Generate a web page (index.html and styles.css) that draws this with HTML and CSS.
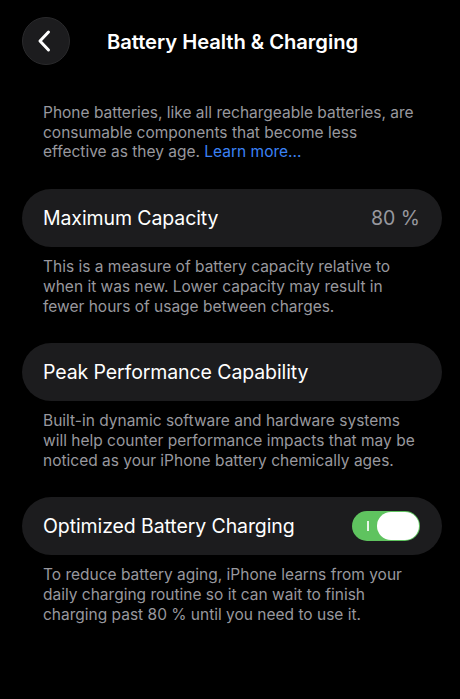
FILE: index.html
```html
<!DOCTYPE html>
<html lang="en">
<head>
    <meta charset="UTF-8">
    <meta name="viewport" content="width=device-width, initial-scale=1.0">
    <title>Battery Health &amp; Charging</title>
    <link rel="stylesheet" href="styles.css">
</head>
<body>
    <div class="screen">
        <header class="nav-bar">
            <button class="back-btn" aria-label="Back">
                <svg width="18" height="24" viewBox="0 0 18 24">
                    <path d="M12.5 3 L4 12 L12.5 21" fill="none" stroke="#fff" stroke-width="3" stroke-linecap="round" stroke-linejoin="round"/>
                </svg>
            </button>
            <h1>Battery Health &amp; Charging</h1>
        </header>

        <p class="intro">Phone batteries, like all rechargeable batteries, are consumable components that become less<br>effective as they age. <a href="#">Learn more...</a></p>

        <div class="row">
            <span class="row-label">Maximum Capacity</span>
            <span class="row-value">80 %</span>
        </div>
        <p class="footnote">This is a measure of battery capacity relative to when it was new. Lower capacity may result in fewer hours of usage between charges.</p>

        <div class="row">
            <span class="row-label">Peak Performance Capability</span>
        </div>
        <p class="footnote">Built-in dynamic software and hardware systems will help counter performance impacts that may be noticed as your iPhone battery chemically ages.</p>

        <div class="row">
            <span class="row-label">Optimized Battery Charging</span>
            <div class="toggle on">
                <span class="toggle-mark"></span>
                <span class="toggle-knob"></span>
            </div>
        </div>
        <p class="footnote">To reduce battery aging, iPhone learns from your daily charging routine so it can wait to finish charging past 80 % until you need to use it.</p>
    </div>
</body>
</html>
```

FILE: styles.css
```css
body {
    margin: 0;
    background: #000;
    color: #fff;
    font-family: 'Inter', 'Noto Sans', sans-serif;
    -webkit-font-smoothing: antialiased;
}

.screen {
    padding: 17px 18px 40px 22px;
}

.nav-bar {
    display: flex;
    align-items: center;
    height: 48px;
}

.back-btn {
    width: 48px;
    height: 48px;
    border-radius: 50%;
    border: 1px solid #2a2a2c;
    background: #1c1c1e;
    display: flex;
    align-items: center;
    justify-content: center;
    padding: 0 2px 0 0;
    cursor: pointer;
}

.nav-bar h1 {
    margin: 0 0 0 37px;
    font-size: 20.2px;
    font-weight: 600;
    letter-spacing: -0.05px;
}

.intro,
.footnote {
    margin: 0;
    padding: 0 21px;
    font-size: 15.5px;
    line-height: 19.7px;
    color: #98989e;
}

.intro {
    margin-top: 38px;
    margin-bottom: 27px;
}

.intro a {
    color: #3b82f6;
    text-decoration: none;
}

.row {
    display: flex;
    align-items: center;
    justify-content: space-between;
    height: 58px;
    padding: 0 22px 0 21px;
    background: #1c1c1e;
    border-radius: 29px;
}

.row-label {
    font-size: 19.5px;
    letter-spacing: -0.1px;
}

.row-value {
    font-size: 19.5px;
    color: #98989e;
}

.footnote {
    margin-top: 10px;
    margin-bottom: 27px;
}

.toggle {
    position: relative;
    width: 68px;
    height: 30px;
    border-radius: 15px;
    background: #34363a;
}

.toggle.on {
    background: #5fc35f;
}

.toggle-mark {
    position: absolute;
    left: 15px;
    top: 10px;
    width: 1.5px;
    height: 10px;
    background: rgba(255, 255, 255, 0.85);
}

.toggle-knob {
    position: absolute;
    right: 1px;
    top: 1px;
    width: 42px;
    height: 28px;
    border-radius: 14px;
    background: #fff;
}
```
